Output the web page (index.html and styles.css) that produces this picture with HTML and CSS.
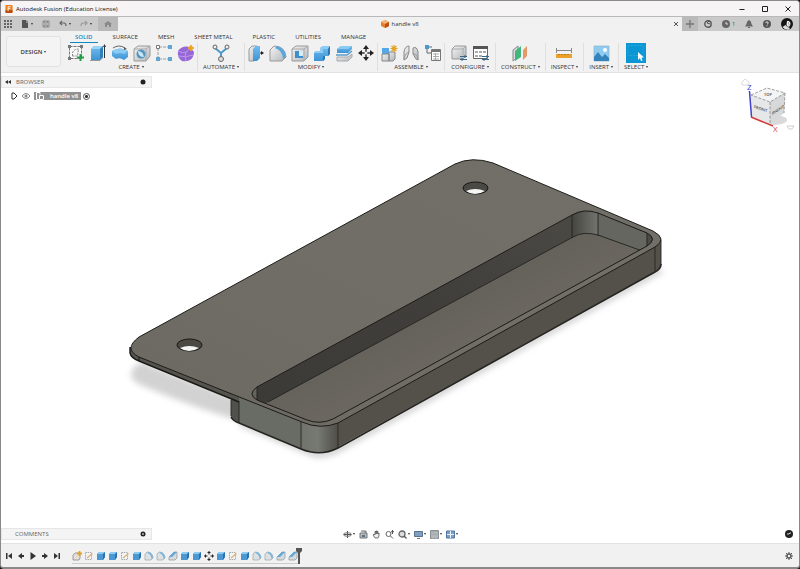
FILE: index.html
```html
<!DOCTYPE html>
<html lang="en">

<head>
    <meta charset="UTF-8">
    <meta name="viewport" content="width=device-width, initial-scale=1.0">
    <title>Autodesk Fusion (Education License)</title>
    <link rel="stylesheet" href="styles.css">
</head>

<body>
    <!-- shared icons -->
    <svg class="sprite" aria-hidden="true">
        <defs>
            <linearGradient id="blue" x1="0" y1="0" x2="0" y2="1">
                <stop offset="0" stop-color="#73bdf0" />
                <stop offset="1" stop-color="#3d93d3" />
            </linearGradient>
            <linearGradient id="grey" x1="0" y1="0" x2="1" y2="1">
                <stop offset="0" stop-color="#f4f4f4" />
                <stop offset="1" stop-color="#b3b7ba" />
            </linearGradient>
        </defs>
        <symbol id="t-box" viewBox="0 0 10 10">
            <path d="M1 3l2-2h6v5L7 9H1z" fill="#4b98d2" />
            <path d="M1 3l2-2h6L7 3z" fill="#8ccbf4" />
            <path d="M7 3l2-2v5L7 9z" fill="#2c71aa" />
        </symbol>
        <symbol id="t-sketch" viewBox="0 0 10 10">
            <path d="M1.500 1.500h6v7h-6z" fill="#f3f3f3" stroke="#999" stroke-width=".8" stroke-dasharray="1.500 .7" />
            <path d="M3 7L8.500 2.500" stroke="#d9b47b" stroke-width="1.300" />
        </symbol>
        <symbol id="t-fillet" viewBox="0 0 10 10">
            <path d="M1 9V3l2-2c4 0 6 3 6 6L7 9z" fill="#dde1e3" stroke="#9ba3a8" stroke-width=".7" />
            <path d="M4 1c3 0 5 3 5 6L7.500 8C7.500 5 6 3 3.500 2.200z" fill="#79b5dc" />
        </symbol>
        <symbol id="t-chamfer" viewBox="0 0 10 10">
            <path d="M1 9V6l5-5h3v6L7 9z" fill="#d5dadd" stroke="#8d969c" stroke-width=".7" />
            <path d="M1 6l5-5h3L4 6z" fill="#5fa7da" />
        </symbol>
        <symbol id="t-part" viewBox="0 0 10 10">
            <path d="M1 4l2-2h5v5L7 9H1z" fill="#e3dfd4" stroke="#8a8a8a" stroke-width=".8" />
            <path d="M7.500 0v5M5 2.500h5" stroke="#e5a324" stroke-width="1.800" />
        </symbol>
        <symbol id="t-move" viewBox="0 0 10 10">
            <path d="M5 1v8M1 5h8" stroke="#222" stroke-dasharray="2.500 3 2.500" />
            <path d="M5 0l2 2H3zM5 10l2-2H3zM0 5l2-2v4zM10 5L8 3v4z" fill="#222" />
        </symbol>
    </svg>

    <div class="app">
        <header class="titlebar">
            <svg class="logo" viewBox="0 0 8 9">
                <rect width="8" height="9" rx="1" fill="#ef7d18" />
                <path d="M0 6h8v2a1 1 0 0 1-1 1H1a1 1 0 0 1-1-1z" fill="#b64a0c" />
                <path d="M3 7V2h3M3 4h2.500" stroke="#fff" fill="none" />
            </svg>
            <h1>Autodesk Fusion (Education License)</h1>
            <div class="window-buttons">
                <button type="button" aria-label="Minimize"><svg viewBox="0 0 8 8"><path d="M1.500 4.500h5" stroke="#222" /></svg></button>
                <button type="button" aria-label="Maximize"><svg viewBox="0 0 8 8"><path d="M1.500 1.500h5v5h-5z" fill="none" stroke="#222" /></svg></button>
                <button type="button" aria-label="Close"><svg viewBox="0 0 8 8"><path d="M1.500 1.500l5 5m0-5l-5 5" stroke="#222" /></svg></button>
            </div>
        </header>

        <div class="docbar">
            <div class="quick">
                <button type="button" aria-label="Data panel"><svg viewBox="0 0 8 8"><path d="M0 0h2v2H0zM3 0h2v2H3zM6 0h2v2H6zM0 3h2v2H0zM3 3h2v2H3zM6 3h2v2H6zM0 6h2v2H0zM3 6h2v2H3zM6 6h2v2H6z" fill="#666" /></svg></button>
                <button type="button" class="drop" aria-label="File"><svg viewBox="0 0 8 8"><path d="M1 0h4v2.500h2V8H1z" fill="#555" /><path d="M5.500 0L7 2H5.500z" fill="#555" /></svg></button>
                <button type="button" aria-label="Save"><svg viewBox="0 0 8 8"><path d="M1 1h6v6H1zM2.500 1v2h3V1M2.500 7V5h3v2" fill="none" stroke="#888" /></svg></button>
                <button type="button" class="drop" aria-label="Undo"><svg viewBox="0 0 8 8"><path d="M3 1L1 3l2 2M1 3h4q2 0 2 3" fill="none" stroke="#666" stroke-width="1.200" /></svg></button>
                <button type="button" class="drop" aria-label="Redo"><svg viewBox="0 0 8 8"><path d="M5 1l2 2-2 2M7 3H3Q1 3 1 6" fill="none" stroke="#999" stroke-width="1.200" /></svg></button>
            </div>
            <button type="button" class="home" aria-label="Home"><svg viewBox="0 0 8 8"><path d="M0 4l4-3 4 3H7v3H5V5H3v2H1V4z" fill="#888" /></svg></button>
            <div class="doc-tab">
                <div class="doc-title">
                    <svg viewBox="0 0 8 8"><path d="M4 0l4 2v4L4 8 0 6V2z" fill="#e77d2d" /><path d="M4 0l4 2-4 2-4-2z" fill="#f6b376" /><path d="M4 4l4-2v4L4 8z" fill="#b9510f" /></svg>
                    <span>handle v8</span>
                </div>
                <button type="button" class="doc-close" aria-label="Close tab"><svg viewBox="0 0 8 8"><path d="M2 2l4 4m0-4L2 6" stroke="#555" stroke-width="1" /></svg></button>
            </div>
            <button type="button" class="new-tab" aria-label="New tab"><svg viewBox="0 0 8 8"><path d="M4 0v8M0 4h8" stroke="#777" stroke-width="1.400" /></svg></button>
            <div class="status">
                <button type="button" aria-label="Extensions"><svg viewBox="0 0 8 8"><circle cx="4" cy="4" r="3.200" fill="none" stroke="#555" stroke-width="1.400" /><path d="M5 1L3 3l3 1" stroke="#555" fill="none" /></svg></button>
                <button type="button" class="jobs" aria-label="Job status"><svg viewBox="0 0 8 8"><circle cx="4" cy="4" r="4" fill="#666" /><path d="M4 2v2h2" stroke="#ddd" fill="none" /></svg>1</button>
                <button type="button" aria-label="Notifications"><svg viewBox="0 0 8 8"><path d="M4 0q2.500 1 2.500 4L8 6.500H0L1.500 4Q1.500 1 4 0zM3 7h2v1H3z" fill="#666" /></svg></button>
                <button type="button" aria-label="Help"><svg viewBox="0 0 8 8"><circle cx="4" cy="4" r="4" fill="#555" /><path d="M2.800 3q0-1.200 1.200-1.200T5.200 3Q5 3.700 4 4.500M4 5.300v1" stroke="#eee" fill="none" stroke-width=".9" /></svg></button>
                <button type="button" class="avatar" aria-label="Account"><svg viewBox="0 0 12 12"><circle cx="6" cy="6" r="6" fill="#151515" /><path d="M6 3l2 0 1.500 2-.5 3-2 1-1.500-2z" fill="#f1f1f1" /><path d="M7 5h1M7.500 7h1" stroke="#222" stroke-width=".7" /><path d="M1.500 9l3-2 2 2 2.500 1-1 1.500q-4 1-6.500-2.500z" fill="#ddd" /></svg></button>
            </div>
        </div>

        <div class="ribbon">
            <button type="button" class="workspace drop">DESIGN</button>
            <div class="ribbon-main">
                <nav class="tabs">
                    <a href="#solid" class="active">SOLID</a>
                    <a href="#surface">SURFACE</a>
                    <a href="#mesh">MESH</a>
                    <a href="#sheet-metal">SHEET METAL</a>
                    <a href="#plastic">PLASTIC</a>
                    <a href="#utilities">UTILITIES</a>
                    <a href="#manage">MANAGE</a>
                </nav>
                <div class="groups">
                    <div class="group">
                        <div class="tools">
                            <button type="button" aria-label="Create sketch"><svg viewBox="0 0 18 18"><path d="M2.500 2.500h12v12h-12z" fill="#f8f8f8" stroke="#777" stroke-dasharray="3 1" /><path d="M5.500 12V9q1-4 6-4l-1 7z" fill="none" stroke="#888" stroke-dasharray="2 1" /><path d="M1 1h3v3H1zM13 1h3v3h-3zM1 13h3v3H1z" fill="#777" /><path d="M13.500 10v7M10 13.500h7" stroke="#249b46" stroke-width="2" /></svg></button>
                            <button type="button" aria-label="Extrude"><svg viewBox="0 0 18 18"><path d="M2 5l3-3h9v11l-3 3H2z" fill="url(#blue)" /><path d="M2 5l3-3h9l-3 3z" fill="#9bd3f7" /><path d="M11 5l3-3v11l-3 3z" fill="#327fb9" /><path d="M1 16.500h10l3-3" fill="none" stroke="#999" /><path d="M15.500 14V3" stroke="#333" /><path d="M15.500 0L17 3h-3z" fill="#333" /></svg></button>
                            <button type="button" aria-label="Revolve"><svg viewBox="0 0 18 18"><path d="M1 7q8-5 16 0v6l-4 3q-4-3-8-1l-4-3z" fill="url(#blue)" /><path d="M1 7q8-5 16 0l-4 3q-4-2-8 0z" fill="#8bcaf3" /><path d="M2 4q6-4 12 0" fill="none" stroke="#666" /><path d="M16 5l-3-2v3z" fill="#555" /></svg></button>
                            <button type="button" aria-label="Hole"><svg viewBox="0 0 18 18"><path d="M1 5l4-3h12v10l-4 5H1z" fill="url(#grey)" stroke="#999" /><path d="M1 5h12v12M13 5l4-3" fill="none" stroke="#aaa" /><circle cx="8" cy="10" r="4.500" fill="#5394bf" /><path d="M5 7q5 0 6 6-6 0-6-6z" fill="#c9e6f6" /></svg></button>
                            <button type="button" aria-label="Pattern"><svg viewBox="0 0 18 18"><path d="M4 3h10M3 4v10M4 15h10" stroke="#999" stroke-dasharray="3 1" fill="none" /><path d="M1.500 1.500h3v3h-3z" fill="#fff" stroke="#777" /><path d="M13 1h4v4h-4zM1 13h4v4H1zM13 13h4v4h-4z" fill="#5fa7d2" /></svg></button>
                            <button type="button" aria-label="Create form"><svg viewBox="0 0 18 18"><path d="M1 7q4-6 12-4l4 5q0 5-4 8-4 2-8 1-5-3-4-10z" fill="#9567d7" /><path d="M1 7q5 3 8 1t4-4M9 8q-2 4 0 9M1 12q7 2 15-1" fill="none" stroke="#bd98ec" /><path d="M14 1l1 2 2 1-2 1-1 2-1-2-2-1 2-1z" fill="#efa51a" stroke="#efa51a" /></svg></button>
                        </div>
                        <button type="button" class="group-label drop">CREATE</button>
                    </div>
                    <div class="group narrow">
                        <div class="tools">
                            <button type="button" aria-label="Automated modeling"><svg viewBox="0 0 18 18"><path d="M3 4l6 5 6-5M9 9v6" fill="none" stroke="#4d9ac9" stroke-width="2" /><circle cx="3" cy="3" r="2" fill="#eee" stroke="#666" /><circle cx="15" cy="3" r="2" fill="#eee" stroke="#666" /><circle cx="9" cy="15" r="2.500" fill="#ddd" stroke="#666" /></svg></button>
                        </div>
                        <button type="button" class="group-label drop">AUTOMATE</button>
                    </div>
                    <div class="group">
                        <div class="tools">
                            <button type="button" aria-label="Press pull"><svg viewBox="0 0 18 18"><path d="M2 5l3-3h5v11l-3 4H2z" fill="url(#grey)" stroke="#999" /><path d="M6 5l3-3h4v12l-3 3H6z" fill="url(#blue)" /><path d="M13 9h3" stroke="#222" /><path d="M17 9l-3-2v4z" fill="#222" /></svg></button>
                            <button type="button" aria-label="Fillet"><svg viewBox="0 0 18 18"><path d="M1 17V6l4-4q11 0 12 11l-4 4z" fill="url(#grey)" stroke="#999" /><path d="M8 2q8 2 9 11l-3 2Q14 7 6 4z" fill="#58a7df" /></svg></button>
                            <button type="button" aria-label="Shell"><svg viewBox="0 0 18 18"><path d="M1 5l4-3h12v11l-4 4H1z" fill="url(#grey)" stroke="#999" /><path d="M4 7h8v7H4z" fill="#3c8fcc" /><path d="M8 7h4v5H8z" fill="#d9ebf5" /><path d="M13 5l4-3M13 5v12M1 5h12" stroke="#aaa" /></svg></button>
                            <button type="button" aria-label="Combine"><svg viewBox="0 0 18 18"><path d="M1 9l2-2h4V4l3-2h7v8l-2 2h-3v3l-2 2H1z" fill="url(#blue)" /><path d="M1 9l2-2h4V4l3-2h7l-2 3h-5v4z" fill="#8cccf5" /><path d="M15 5l2-3v8l-2 2zM10 12h2v3l-2 2z" fill="#2d78b2" /></svg></button>
                            <button type="button" aria-label="Split body"><svg viewBox="0 0 18 18"><path d="M2 5l4-3h11v3l-4 4H2z" fill="url(#blue)" /><path d="M2 5l4-3h11l-4 3z" fill="#8bcaf2" /><path d="M1 11h11l5-4" fill="none" stroke="#5a9dca" stroke-width="1.500" /><path d="M2 13h11l4-3v3l-4 4H2z" fill="url(#grey)" stroke="#aaa" /></svg></button>
                            <button type="button" aria-label="Move"><svg viewBox="0 0 18 18"><path d="M9 3v12M3 9h12" stroke="#333" stroke-width="1.500" /><path d="M9 1l3 4H6zM9 17l3-4H6zM1 9l4-3v6zM17 9l-4-3v6z" fill="#222" /><circle cx="9" cy="9" r="1.500" fill="#f1f1f1" /></svg></button>
                        </div>
                        <button type="button" class="group-label drop">MODIFY</button>
                    </div>
                    <div class="group">
                        <div class="tools">
                            <button type="button" aria-label="New component"><svg viewBox="0 0 18 18"><path d="M2 4h7v6H2z" fill="#54a7e8" /><path d="M2 10h7v7H2zM9 8h6v7l-2 2H9z" fill="url(#grey)" stroke="#888" /><path d="M14 1v7M10.500 4.500h7M11.500 2l5 5m0-5l-5 5" stroke="#e4a21c" stroke-width="1.200" /></svg></button>
                            <button type="button" aria-label="Joint"><svg viewBox="0 0 18 18"><path d="M2 16V8q1-6 5-6v6l-2 6zM16 16V8q-1-6-5-4v6l3 5z" fill="url(#grey)" stroke="#888" /><path d="M2 16q0-6 5-8M16 16q0-6-5-6" fill="none" stroke="#999" /></svg></button>
                            <button type="button" aria-label="Bill of materials"><svg viewBox="0 0 18 18"><path d="M1 1h4v4H1z" fill="#4d9aca" /><path d="M3 5v4h4M5 3h3" stroke="#666" fill="none" /><path d="M7.500 5.500h9v11h-9z" fill="#fff" stroke="#777" /><path d="M8 6h8v2H8z" fill="#777" /><path d="M9 10h6M9 12.500h6M9 15h6M11.500 9v7" stroke="#aaa" /></svg></button>
                        </div>
                        <button type="button" class="group-label drop">ASSEMBLE</button>
                    </div>
                    <div class="group narrow">
                        <div class="tools">
                            <button type="button" aria-label="Configure part"><svg viewBox="0 0 18 18"><path d="M2 5l3-3h11v10l-3 3H2z" fill="url(#grey)" stroke="#999" /><path d="M2 5h11v6M13 5l3-3" fill="none" stroke="#aaa" /><path d="M10 12.500h7M10 15.500h7M15 11v3M12 14v3" stroke="#37678b" /></svg></button>
                            <button type="button" aria-label="Configuration table"><svg viewBox="0 0 18 18"><path d="M1.500 2.500h14v12h-14z" fill="#fff" stroke="#666" /><path d="M1 2h15v3H1z" fill="#555" /><path d="M3 7h3v2H3zM7 7h3v2H7zM11 7h3v2h-3zM3 11h3v2H3zM7 11h3v2H7z" fill="#aaa" /><path d="M10 12.500h7M10 15.500h7M15 11v3M12 14v3" stroke="#37678b" /></svg></button>
                        </div>
                        <button type="button" class="group-label drop">CONFIGURE</button>
                    </div>
                    <div class="group narrow">
                        <div class="tools">
                            <button type="button" aria-label="Offset plane"><svg viewBox="0 0 18 18"><path d="M2 6l5-4v11l-5 4z" fill="#d7dcdf" stroke="#888" /><path d="M4 7l6-5v11l-6 4z" fill="#42b67b" /><path d="M12 6l4-4v10l-4 4z" fill="#e39a69" /></svg></button>
                        </div>
                        <button type="button" class="group-label drop">CONSTRUCT</button>
                    </div>
                    <div class="group narrow">
                        <div class="tools">
                            <button type="button" aria-label="Measure"><svg viewBox="0 0 18 18"><path d="M2 6.500h14M1.500 4v5M16.500 4v5" stroke="#888" fill="none" /><path d="M1 10h16v4H1z" fill="#eba129" /><path d="M4 10v1M7 10v1M10 10v1M13 10v1" stroke="#8b601c" /></svg></button>
                        </div>
                        <button type="button" class="group-label drop">INSPECT</button>
                    </div>
                    <div class="group narrow">
                        <div class="tools">
                            <button type="button" aria-label="Insert decal"><svg viewBox="0 0 18 18"><path d="M2 2h15v15H2z" fill="#8ecbf0" stroke="#8ab5cf" stroke-width=".7" /><path d="M2 13l4-5 4 5 3-3 4 4v3H2z" fill="#3583bb" /><circle cx="13" cy="6" r="2" fill="#fff" /></svg></button>
                        </div>
                        <button type="button" class="group-label drop">INSERT</button>
                    </div>
                    <div class="group narrow last">
                        <div class="tools">
                            <button type="button" class="selected" aria-label="Select"><svg viewBox="0 0 20 20"><path d="M2 2.500h15v10H2z" fill="none" stroke="#37aae0" stroke-dasharray="2 1" stroke-width=".7" /><path d="M12 9v8l2-2 1 3 1.500-.5-1-3H18z" fill="#fff" /></svg></button>
                        </div>
                        <button type="button" class="group-label drop">SELECT</button>
                    </div>
                </div>
            </div>
        </div>

        <main class="viewport">
            <svg class="model" viewBox="1 73 798 470" role="img" aria-label="handle v8">
                <defs>
                    <linearGradient id="plate" x1="0" y1="1" x2="1" y2="0">
                        <stop offset="0" stop-color="#6c6862" />
                        <stop offset=".5" stop-color="#716e67" />
                        <stop offset="1" stop-color="#706f68" />
                    </linearGradient>
                    <linearGradient id="wall" x1="0" y1="1" x2="1" y2="0">
                        <stop offset="0" stop-color="#3b3a36" />
                        <stop offset=".5" stop-color="#403e3a" />
                        <stop offset="1" stop-color="#4f4d48" />
                    </linearGradient>
                    <linearGradient id="floor" x1="0" y1="0" x2="1" y2="1">
                        <stop offset=".2" stop-color="#5b5852" />
                        <stop offset=".55" stop-color="#6c6861" />
                        <stop offset=".8" stop-color="#5a5751" />
                    </linearGradient>
                    <linearGradient id="corner">
                        <stop offset="0" stop-color="#70726b" />
                        <stop offset=".45" stop-color="#777973" />
                        <stop offset="1" stop-color="#4f4d47" />
                    </linearGradient>
                    <linearGradient id="inner-corner">
                        <stop offset="0" stop-color="#454540" />
                        <stop offset="1" stop-color="#73746e" />
                    </linearGradient>
                    <filter id="soft" x="-10%" y="-10%" width="120%" height="120%">
                        <feGaussianBlur stdDeviation="3" />
                    </filter>
                </defs>
                <!-- ground shadow -->
                <path d="M131 377Q130 367 142 362L240 400V421Q190 406 148 388Q134 383 131 377z" fill="#d2d2d2" filter="url(#soft)" />
                <path d="M240 423L314 454Q325 456 337 450L661 270" fill="none" stroke="#c5c5c5" stroke-width="5" filter="url(#soft)" />
                <!-- grip sides -->
                <path d="M231 399V415Q231 419 239 422L300 448Q320 457 338 447L655 272Q661 268 661 264V238L338 415L239 395z" fill="#54514b" />
                <path d="M239 395L302 420V449L239 423z" fill="#696b65" />
                <path d="M231 399L239 400V423Q231 420 231 416z" fill="#50514c" />
                <path d="M301 421Q321 430 338 422V448Q320 457 301 449z" fill="url(#corner)" />
                <path d="M231 417Q233 421 239 423L301 449Q320 457 338 448L655 272Q661 269 661 264" fill="none" stroke="#252420" stroke-width="1.600" />
                <path d="M655 247V271M661 240V265M301 422V449M338 423V448M239 401V423M231 400V416" fill="none" stroke="#282722" stroke-width=".9" />
                <!-- plate -->
                <path d="M130 347V353Q131 358 139 361L239 402V396L139 355z" fill="#55544e" />
                <path d="M130 347V353Q131 358 139 361L239 402" fill="none" stroke="#1b1a17" stroke-width="1.400" />
                <path d="M139 337L455 164Q472 156 493 163L653 231Q668 239 655 247L338 423Q320 430 302 422L139 357Q123 349 139 337z" fill="url(#plate)" stroke="#1d1c19" />
                <path d="M139 357V361" stroke="#1d1c19" />
                <!-- pocket -->
                <clipPath id="pocket">
                    <path d="M257 387L572 215Q584 208 598 213L647 233Q658 239 647 246L333 419Q320 425 307 420L257 400Q247 394 257 387z" />
                </clipPath>
                <g clip-path="url(#pocket)">
                    <path d="M240 430h420V200H240z" fill="url(#wall)" />
                    <path d="M257 408L573 237Q583 231 598 235L645 252L660 260L320 440z" fill="url(#floor)" />
                    <path d="M572 210h26v25Q583 231 572 237z" fill="url(#inner-corner)" />
                    <path d="M598 211L647 231V253L598 235z" fill="#65665f" />
                    <path d="M250 389L257 384V401L250 398z" fill="#63645d" />
                    <path d="M268 402L573 237Q583 231 598 235L645 252M572 214V238M598 212V236M647 232V247M257 386V401" fill="none" stroke="#23221f" stroke-width=".9" />
                </g>
                <path d="M257 387L572 215Q584 208 598 213L647 233Q658 239 647 246L333 419Q320 425 307 420L257 400Q247 394 257 387z" fill="none" stroke="#1d1c19" />
                <!-- screw holes -->
                <ellipse cx="475.500" cy="188" rx="12.500" ry="6" fill="#4b4944" stroke="#191815" />
                <path d="M466 191Q475 187 485 191Q480 194 475 194T466 191z" fill="#f5f5f5" />
                <ellipse cx="189.500" cy="345" rx="12.500" ry="6" fill="#4b4944" stroke="#191815" />
                <path d="M180 348Q189 344 199 348Q194 351 189 351T180 348z" fill="#f5f5f5" />
            </svg>

            <div class="overlay">
                <div class="overlay-top">
                    <div class="browser">
                        <div class="panel">
                            <button type="button" aria-label="Collapse browser"><svg viewBox="0 0 8 8"><path d="M4 2L1 4l3 2zM7 2L4 4l3 2z" fill="#333" /></svg></button>
                            <h2>BROWSER</h2>
                            <button type="button" aria-label="Browser options"><svg viewBox="0 0 8 8"><circle cx="4" cy="4" r="2.500" fill="#222" /></svg></button>
                        </div>
                        <div class="tree-row">
                            <button type="button" aria-label="Expand"><svg viewBox="0 0 8 8"><path d="M2 1h2l3 3-3 3H2z" fill="#fff" stroke="#333" /></svg></button>
                            <button type="button" aria-label="Toggle visibility"><svg viewBox="0 0 8 8"><path d="M0 4q4-5 8 0-4 5-8 0z" fill="none" stroke="#888" /><circle cx="4" cy="4" r="1.500" fill="#888" /></svg></button>
                            <a href="#handle" class="node"><svg viewBox="0 0 8 8"><path d="M3 7.500H.5v-7H4v2M3.500 3.500h4v4h-4z" fill="none" stroke="#fff" /></svg><span>handle v8</span></a>
                            <input type="radio" name="active-component" aria-label="Activate handle v8" checked>
                        </div>
                    </div>
                    <svg class="viewcube" viewBox="741 75 58 60">
                        <ellipse cx="774" cy="120" rx="13" ry="5" fill="#dadada" />
                        <path d="M751 95l16-7 18 5-15 9z" fill="#f4f4f4" />
                        <path d="M751 95l19 7v22l-19-7z" fill="#e6e7e8" />
                        <path d="M770 102l15-9-1 20-14 11z" fill="#d6d8da" />
                        <path d="M751 95l16-7 18 5-15 9zM770 102v22M785 93l-1 20" fill="none" stroke="#888" stroke-width=".8" stroke-dasharray="3 1.500" />
                        <path d="M749.500 91l2 26" stroke="#4040c9" stroke-width="1.500" />
                        <path d="M751 117l22 9" stroke="#d33a3a" stroke-width="1.500" />
                        <text class="axis z" x="747" y="90">Z</text>
                        <text class="axis x" x="773" y="132">X</text>
                        <text class="face front" x="754" y="108">FRONT</text>
                        <text class="face right" x="772" y="115">RIGHT</text>
                        <text class="face" x="764" y="96">TOP</text>
                        <path d="M742 85v-3l3-3 4 3v3z" fill="none" stroke="#ccc" stroke-width=".7" />
                        <path d="M787 126h7l-2 3h-3z" fill="#fff" stroke="#bbb" stroke-width=".7" />
                    </svg>
                </div>

                <div class="overlay-bottom">
                    <div class="panel comments">
                        <h2>COMMENTS</h2>
                        <button type="button" aria-label="Comments options"><svg viewBox="0 0 8 8"><circle cx="4" cy="4" r="2.500" fill="#222" /><path d="M4 3v2M3 4h2" stroke="#fff" stroke-width=".6" /></svg></button>
                    </div>
                    <div class="navbar">
                        <button type="button" class="drop" aria-label="Orbit"><svg viewBox="0 0 9 9"><path d="M4.500 1v7M1 4.500h7" stroke="#555" /><ellipse cx="4.500" cy="4.500" rx="4" ry="1.800" fill="none" stroke="#777" /></svg></button>
                        <button type="button" aria-label="Look at"><svg viewBox="0 0 9 9"><path d="M1 3h7v5H1zM2 1h5v2" fill="#b4bbc0" stroke="#777" /><path d="M3 5h3v2H3z" fill="#5e7484" /></svg></button>
                        <button type="button" aria-label="Pan"><svg viewBox="0 0 9 9"><path d="M3 8L1 5l1-1 1 1V1.500h1V4 1h1v3-2.500h1V4l1-1v3L6 8z" fill="#eee" stroke="#555" stroke-width=".8" /></svg></button>
                        <button type="button" aria-label="Zoom"><svg viewBox="0 0 9 9"><circle cx="3.500" cy="4" r="2.500" fill="none" stroke="#666" /><path d="M5.500 6L8 8.500M7.500 0v4M6 2.500l1.500-2L9 2.500" stroke="#555" fill="none" /></svg></button>
                        <button type="button" class="drop" aria-label="Fit"><svg viewBox="0 0 9 9"><circle cx="4" cy="4" r="3" fill="#ddd" stroke="#666" stroke-width="1.300" /><path d="M6 6l2.500 2.500" stroke="#555" stroke-width="1.300" /></svg></button>
                        <button type="button" class="drop" aria-label="Display settings"><svg viewBox="0 0 9 9"><path d="M.5 1.500h8v5h-8z" fill="#7f9fc2" stroke="#58738f" /><path d="M3 8.500h3" stroke="#777" /></svg></button>
                        <button type="button" class="drop" aria-label="Grid and snaps"><svg viewBox="0 0 9 9"><path d="M.5.5h8v8h-8z" fill="#a5abae" stroke="#8b9195" /><path d="M1 3h7M1 6h7M3 6v3M6 6v3" stroke="#bcc2c5" /></svg></button>
                        <button type="button" class="drop" aria-label="Viewports"><svg viewBox="0 0 9 9"><path d="M.5 1h8v7h-8z" fill="#7f9fc2" stroke="#4e76a3" /><path d="M4.500 1v7M1 4.500h7" stroke="#e8f0f8" /></svg></button>
                    </div>
                    <button type="button" class="notice" aria-label="Text commands"><svg viewBox="0 0 8 8"><circle cx="4" cy="4" r="4" fill="#222" /><path d="M2 4h2l1-1h1" stroke="#ddd" fill="none" /></svg></button>
                </div>
            </div>
        </main>

        <footer class="timeline">
            <div class="playback">
                <button type="button" aria-label="Go to start"><svg viewBox="0 0 8 8"><path d="M1 1h1.500v6H1zM7 1v6L3 4z" fill="#333" /></svg></button>
                <button type="button" aria-label="Step back"><svg viewBox="0 0 8 8"><path d="M5 1v6L1 4zM5 3h2v2H5z" fill="#333" /></svg></button>
                <button type="button" aria-label="Play"><svg viewBox="0 0 8 8"><path d="M1.500 0L7 4 1.500 8z" fill="#333" /></svg></button>
                <button type="button" aria-label="Step forward"><svg viewBox="0 0 8 8"><path d="M3 1v6l4-3zM1 3h2v2H1z" fill="#333" /></svg></button>
                <button type="button" aria-label="Go to end"><svg viewBox="0 0 8 8"><path d="M5.500 1H7v6H5.500zM1 1v6l4-3z" fill="#333" /></svg></button>
            </div>
            <div class="history">
                <button type="button" aria-label="Component"><svg><use href="#t-part" /></svg></button>
                <button type="button" aria-label="Sketch 1"><svg><use href="#t-sketch" /></svg></button>
                <button type="button" aria-label="Extrude 1"><svg><use href="#t-box" /></svg></button>
                <button type="button" aria-label="Extrude 2"><svg><use href="#t-box" /></svg></button>
                <button type="button" aria-label="Sketch 2"><svg><use href="#t-sketch" /></svg></button>
                <button type="button" aria-label="Extrude 3"><svg><use href="#t-box" /></svg></button>
                <button type="button" aria-label="Fillet 1"><svg><use href="#t-fillet" /></svg></button>
                <button type="button" aria-label="Fillet 2"><svg><use href="#t-fillet" /></svg></button>
                <button type="button" aria-label="Chamfer 1"><svg><use href="#t-chamfer" /></svg></button>
                <button type="button" aria-label="Extrude 4"><svg><use href="#t-box" /></svg></button>
                <button type="button" aria-label="Extrude 5"><svg><use href="#t-box" /></svg></button>
                <button type="button" aria-label="Move 1"><svg><use href="#t-move" /></svg></button>
                <button type="button" aria-label="Extrude 6"><svg><use href="#t-box" /></svg></button>
                <button type="button" aria-label="Sketch 3"><svg><use href="#t-sketch" /></svg></button>
                <button type="button" aria-label="Extrude 7"><svg><use href="#t-box" /></svg></button>
                <button type="button" aria-label="Fillet 3"><svg><use href="#t-fillet" /></svg></button>
                <button type="button" aria-label="Fillet 4"><svg><use href="#t-fillet" /></svg></button>
                <button type="button" aria-label="Chamfer 2"><svg><use href="#t-chamfer" /></svg></button>
                <button type="button" aria-label="Chamfer 3"><svg><use href="#t-chamfer" /></svg></button>
            </div>
            <svg class="marker" viewBox="0 0 6 16"><path d="M0 0h6v3L4 5v11H2V5L0 3z" fill="#555" /></svg>
            <button type="button" class="settings" aria-label="Timeline settings"><svg viewBox="0 0 8 8"><circle cx="4" cy="4" r="2" fill="none" stroke="#555" stroke-width="1.400" /><path d="M4 0v2M4 6v2M0 4h2M6 4h2M1 1l1.500 1.500M5.500 5.500L7 7M7 1L5.500 2.500M2.500 5.500L1 7" stroke="#555" /></svg></button>
        </footer>
    </div>
</body>

</html>
```
FILE: styles.css
```css
* {
    margin: 0;
    padding: 0;
    box-sizing: border-box;
}

body {
    font-family: "Open Sans", "Noto Sans", sans-serif;
    font-size: 6px;
    line-height: 8px;
    color: #333;
    background: #111;
}

button {
    display: flex;
    align-items: center;
    border: 0;
    background: none;
    font: inherit;
    color: inherit;
}

a {
    color: inherit;
    text-decoration: none;
}

svg {
    display: block;
    width: 8px;
    height: 8px;
    flex: none;
}

h1,
h2 {
    font-size: 6px;
    font-weight: 400;
}

.sprite {
    position: absolute;
    width: 0;
    height: 0;
}

.app {
    display: flex;
    flex-direction: column;
    height: 100vh;
    border: 1px solid #8b888a;
    border-bottom-width: 2px;
    border-radius: 4px;
    background: #f1f1f1;
    overflow: hidden;
}

.drop::after {
    content: "";
    margin-left: 2px;
    border: 1px solid transparent;
    border-top: 2px solid #333;
    border-bottom: 0;
}

/* title bar */
.titlebar {
    display: flex;
    align-items: center;
    gap: 3px;
    height: 15px;
    padding: 0 7px 0 4px;
    background: #f6f4f4;
}

.titlebar h1 {
    flex: 1;
    color: #111;
}

.window-buttons {
    display: flex;
    gap: 15px;
}

/* document bar */
.docbar {
    display: flex;
    height: 15px;
    background: #cacaca;
    border-top: 1px solid #b9b9b9;
}

.quick {
    display: flex;
    align-items: center;
    gap: 9px;
    padding: 0 6px 0 3px;
}

.home {
    width: 20px;
    justify-content: center;
    background: #b9b9b9;
}

.doc-tab {
    display: grid;
    flex: 1;
    grid-template-columns: 1fr auto 1fr;
    align-items: center;
    background: #f1f1f1;
}

.doc-title {
    display: flex;
    grid-column: 2;
    gap: 2px;
}

.doc-close {
    justify-self: end;
    margin-right: 2px;
}

.new-tab {
    width: 16px;
    justify-content: center;
    background: #bababa;
}

.status {
    display: flex;
    align-items: center;
    gap: 10px;
    padding: 0 6px;
}

.jobs {
    gap: 2px;
    font-size: 5px;
}

.avatar svg {
    width: 12px;
    height: 12px;
}

/* ribbon */
.ribbon {
    display: flex;
    height: 42px;
    border-bottom: 1px solid #e2e2e2;
}

.workspace {
    justify-content: center;
    width: 55px;
    height: 31px;
    margin: 5px 4px 0 5px;
    border: 1px solid #e2e2e2;
    border-radius: 3px;
    background: #f4f4f4;
    font-weight: 600;
}

.ribbon-main {
    flex: 1;
}

.tabs {
    display: flex;
    gap: 20px;
    height: 12px;
    padding: 2px 0 0 10px;
}

.tabs a {
    height: 10px;
}

.tabs .active {
    margin: 0 -5px;
    padding: 0 5px;
    color: #1188c0;
    font-weight: 600;
    border-bottom: 1px solid #1188c0;
}

.groups {
    display: flex;
}

.group {
    display: flex;
    flex-direction: column;
    align-items: center;
    height: 28px;
    padding: 0 2px;
    border-right: 1px solid #dfdfdf;
}

.narrow {
    padding: 0 5px;
}

.last {
    border: 0;
}

.tools {
    display: flex;
    align-items: center;
    gap: 4px;
    height: 20px;
}

.tools svg {
    width: 18px;
    height: 18px;
}

.tools .selected {
    background: #0b96d5;
}

.tools .selected svg {
    width: 20px;
    height: 20px;
}

/* viewport */
.viewport {
    display: grid;
    flex: 1;
    min-height: 0;
    background: #fff;
}

.model,
.overlay {
    grid-area: 1 / 1;
    width: 100%;
    height: 100%;
    min-height: 0;
}

.overlay {
    display: flex;
    flex-direction: column;
    justify-content: space-between;
}

.overlay-top {
    display: flex;
    justify-content: space-between;
}

.panel {
    display: flex;
    align-items: center;
    gap: 4px;
    width: 151px;
    height: 12px;
    margin-top: 3px;
    padding: 0 4px 0 2px;
    border: 1px solid #e6e6e6;
    background: #f4f4f4;
}

.panel h2 {
    flex: 1;
    font-size: 6px;
    color: #666;
}

.tree-row {
    display: flex;
    align-items: center;
    gap: 4px;
    height: 16px;
    padding-left: 9px;
}

.node {
    display: flex;
    align-items: center;
    gap: 6px;
    height: 8px;
    padding: 0 3px 0 2px;
    background: #929292;
    color: #fff;
    font-weight: 600;
}

.tree-row input {
    appearance: none;
    width: 7px;
    height: 7px;
    margin-left: -2px;
    border: 1px solid #555;
    border-radius: 50%;
    background: radial-gradient(#333 1px, #fff 2px);
}

.viewcube {
    width: 58px;
    height: 60px;
    margin-top: 2px;
}

.face {
    font-size: 4px;
    font-weight: 600;
    fill: #444;
    transform-box: fill-box;
}

.front {
    transform: skewY(18deg);
}

.right {
    transform: skewY(-32deg);
}

.axis {
    font-size: 8px;
}

.z {
    fill: #4040c9;
}

.x {
    fill: #d33a3a;
}

.overlay-bottom {
    display: grid;
    grid-template-columns: 1fr auto 1fr;
    align-items: center;
    height: 18px;
}

.comments {
    margin: 0;
    padding-left: 13px;
}

.navbar {
    display: flex;
    align-items: center;
    gap: 4px;
}

.navbar svg {
    width: 9px;
    height: 9px;
}

.navbar .drop::after {
    margin-left: 1px;
}

.notice {
    justify-self: end;
    margin-right: 6px;
}

/* timeline */
.timeline {
    display: flex;
    align-items: center;
    height: 24px;
    padding: 0 6px 0 4px;
    border-top: 1px solid #e2e2e2;
}

.playback {
    display: flex;
    gap: 4px;
    width: 67px;
}

.history {
    display: flex;
    gap: 2px;
    padding: 3px 0 2px;
    border-bottom: 1px solid #ccc;
}

.history svg {
    width: 10px;
    height: 10px;
}

.marker {
    width: 6px;
    height: 16px;
    margin-left: -2px;
}

.settings {
    margin-left: auto;
}
```
